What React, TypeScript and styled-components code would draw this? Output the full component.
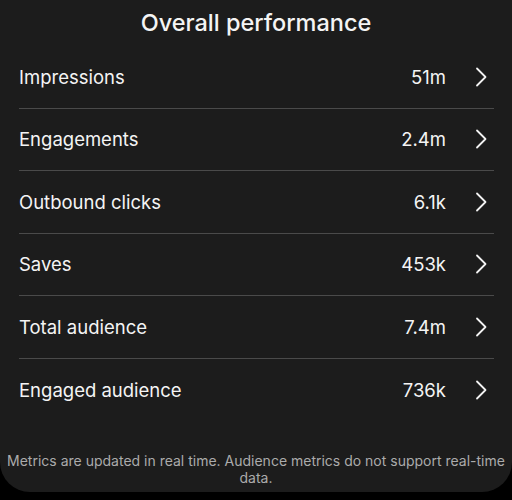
import React from "react";
import styled, { createGlobalStyle } from "styled-components";

const rows = [
  { label: "Impressions", value: "51m" },
  { label: "Engagements", value: "2.4m" },
  { label: "Outbound clicks", value: "6.1k" },
  { label: "Saves", value: "453k" },
  { label: "Total audience", value: "7.4m" },
  { label: "Engaged audience", value: "736k" },
];

const Chevron = () => (
  <svg width="12" height="20" viewBox="0 0 12 20" fill="none">
    <path
      d="M2 1.5 L10.5 10 L2 18.5"
      stroke="#f2f2f2"
      strokeWidth="1.8"
      strokeLinecap="round"
      strokeLinejoin="round"
    />
  </svg>
);

const App = () => (
  <>
    <GlobalStyle />
    <Panel>
      <Title>Overall performance</Title>
      <List>
        {rows.map((row, i) => (
          <Row key={row.label} last={i === rows.length - 1}>
            <Label>{row.label}</Label>
            <Value>{row.value}</Value>
            <Arrow>
              <Chevron />
            </Arrow>
          </Row>
        ))}
      </List>
      <Footer>
        Metrics are updated in real time. Audience metrics do not support
        real-time data.
      </Footer>
    </Panel>
  </>
);

const GlobalStyle = createGlobalStyle`
  body {
    margin: 0;
    background: #000;
    font-family: Inter, "Noto Sans", sans-serif;
  }
`;

const Panel = styled.div`
  display: flex;
  flex-direction: column;
  width: 512px;
  height: 492px;
  background: #1c1c1c;
  border-radius: 0 0 30px 30px;
  color: #f4f4f4;
  overflow: hidden;
`;

const Title = styled.h1`
  margin: 0;
  padding-top: 6px;
  height: 40px;
  font-size: 23.5px;
  font-weight: 500;
  line-height: 34px;
  text-align: center;
`;

const List = styled.div`
  display: flex;
  flex-direction: column;
  margin: 0 18px 0 19px;
`;

const Row = styled.div<{ last?: boolean }>`
  display: flex;
  align-items: center;
  height: 62.5px;
  border-bottom: ${(p) => (p.last ? "none" : "1.5px solid #4a4a4a")};
  box-sizing: border-box;
`;

const Label = styled.span`
  flex: 1;
  font-size: 18.5px;
  font-weight: 400;
`;

const Value = styled.span`
  font-size: 18.5px;
  font-weight: 400;
`;

const Arrow = styled.span`
  display: flex;
  width: 48px;
  justify-content: flex-end;
  padding-right: 7px;
  box-sizing: border-box;
`;

const Footer = styled.p`
  margin: auto 0 0;
  padding: 0 6px 6px;
  font-size: 14px;
  line-height: 17px;
  color: #ababab;
  text-align: center;
`;

export default App;
